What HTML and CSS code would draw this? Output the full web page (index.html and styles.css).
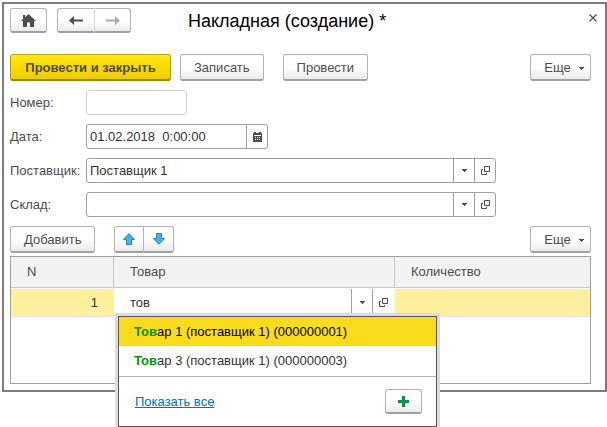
FILE: index.html
```html
<!DOCTYPE html>
<html lang="ru">
<head>
<meta charset="utf-8">
<title>Накладная (создание)</title>
<link rel="stylesheet" href="styles.css">
</head>
<body>
<svg class="sprite" aria-hidden="true">
  <symbol id="caret" viewBox="0 0 5 3"><path d="M0 0h5v1h-1v1h-1v1h-1v-1h-1v-1h-1z" fill="currentColor"/></symbol>
  <symbol id="open" viewBox="0 0 9 9"><path d="M3.500.5h5v5h-5zM2 3.500H.5v5h5V7" fill="none" stroke="currentColor"/></symbol>
  <symbol id="arrow" viewBox="0 0 14 9"><path d="M0 4.500 5 0v3.500h9v2H5V9z" fill="currentColor"/></symbol>
  <symbol id="move" viewBox="0 0 12 12"><path d="M6 .7 11.300 6v.5H8.500v5h-5v-5H.7V6z" fill="#41b4ea" stroke="#2d7fb0"/></symbol>
</svg>
<main class="window">
  <header class="titlebar">
    <button class="btn btn-home" aria-label="Домой"><svg width="15" height="13" viewBox="0 0 15 13"><path d="M7.500 0 15 7h-2v6H9V8.500H6V13H2V7H0L2 5.100V1h2v2.300z" fill="#4d4d4d"/></svg></button>
    <div class="group">
      <button class="btn btn-nav" aria-label="Назад"><svg width="14" height="9"><use href="#arrow"/></svg></button>
      <button class="btn btn-nav forward" aria-label="Вперед"><svg width="14" height="9"><use href="#arrow"/></svg></button>
    </div>
    <h1>Накладная (создание) *</h1>
    <button class="close" aria-label="Закрыть"><svg width="8" height="8" viewBox="0 0 8 8"><path d="M.5.5l7 7M7.500.5l-7 7" stroke="#4d4d4d" stroke-width="1.200"/></svg></button>
  </header>

  <div class="commands">
    <button class="btn btn-primary">Провести и закрыть</button>
    <button class="btn">Записать</button>
    <button class="btn">Провести</button>
    <button class="btn btn-more">Еще <svg width="5" height="3"><use href="#caret"/></svg></button>
  </div>

  <form class="fields">
    <label for="number">Номер:</label>
    <div class="field field-number"><input id="number" type="text"></div>
    <label for="date">Дата:</label>
    <div class="field field-date">
      <input id="date" type="text" value="01.02.2018&nbsp; 0:00:00">
      <button type="button" class="pick" aria-label="Календарь"><svg width="9" height="10" viewBox="0 0 9 10"><path d="M0 1h1V0h2v1h3V0h2v1h1v9H0z" fill="#4d4d4d"/><path d="M1 3.500h7M2 5.500h5M2 7.500h5" stroke="#fff" stroke-dasharray="1 1"/><path d="M1 3.500h7" stroke="#fff"/></svg></button>
    </div>
    <label for="supplier">Поставщик:</label>
    <div class="field field-ref">
      <input id="supplier" type="text" value="Поставщик 1">
      <button type="button" class="pick" aria-label="Выбрать"><svg width="5" height="3"><use href="#caret"/></svg></button>
      <button type="button" class="pick" aria-label="Открыть"><svg width="9" height="9"><use href="#open"/></svg></button>
    </div>
    <label for="store">Склад:</label>
    <div class="field field-ref">
      <input id="store" type="text">
      <button type="button" class="pick" aria-label="Выбрать"><svg width="5" height="3"><use href="#caret"/></svg></button>
      <button type="button" class="pick" aria-label="Открыть"><svg width="9" height="9"><use href="#open"/></svg></button>
    </div>
  </form>

  <div class="table-commands">
    <button class="btn">Добавить</button>
    <div class="group">
      <button class="btn btn-move" aria-label="Вверх"><svg width="12" height="12"><use href="#move"/></svg></button>
      <button class="btn btn-move down" aria-label="Вниз"><svg width="12" height="12"><use href="#move"/></svg></button>
    </div>
    <button class="btn btn-more">Еще <svg width="5" height="3"><use href="#caret"/></svg></button>
  </div>

  <div class="grid">
    <table>
      <colgroup><col class="col-n"><col class="col-item"><col></colgroup>
      <thead><tr><th>N</th><th>Товар</th><th>Количество</th></tr></thead>
      <tbody>
        <tr>
          <td class="num">1</td>
          <td class="editing">
            <div class="editor">
              <input type="text" value="тов" aria-label="Товар">
              <button class="pick" aria-label="Выбрать"><svg width="5" height="3"><use href="#caret"/></svg></button>
              <button class="pick" aria-label="Открыть"><svg width="9" height="9"><use href="#open"/></svg></button>
              <div class="popup">
                <ul>
                  <li class="selected"><b>Тов</b>ар 1 (поставщик 1) (000000001)</li>
                  <li><b>Тов</b>ар 3 (поставщик 1) (000000003)</li>
                </ul>
                <div class="popup-footer">
                  <a href="#">Показать все</a>
                  <button class="btn btn-add" aria-label="Создать"><svg width="11" height="11" viewBox="0 0 11 11"><path d="M4 0h3v4h4v3H7v4H4V7H0V4h4z" fill="#009646"/></svg></button>
                </div>
              </div>
            </div>
          </td>
          <td></td>
        </tr>
      </tbody>
    </table>
  </div>
</main>
</body>
</html>
```
FILE: styles.css
```css
* { box-sizing: border-box; }

body {
  min-height: 100vh;
  margin: 0;
  padding: 2px 0 0 2px;
  background: #fff;
  color: #4d4d4d;
  font: 13px/16px "Liberation Sans", Arial, sans-serif;
}

button, input { font: inherit; color: inherit; }
svg { display: block; flex: none; }
.sprite { position: absolute; width: 0; height: 0; }

.window {
  border: 2px solid #7d7d7d;
  padding: 4px 14px 6px 6px;
}

.btn {
  display: flex;
  align-items: center;
  justify-content: center;
  height: 27px;
  padding: 2px 13px 0;
  border: 1px solid #b4b4b4;
  border-bottom: 2px solid #a0a0a0;
  border-radius: 3px;
  background: linear-gradient(#fff 50%, #ebebeb);
  white-space: nowrap;
}

.group { display: flex; }
.group .btn:first-child { border-radius: 3px 0 0 3px; }
.group .btn:last-child { border-left: 0; border-radius: 0 3px 3px 0; }

.titlebar { display: flex; align-items: center; gap: 10px; }
.titlebar .btn { height: 25px; padding: 0; }
.titlebar .btn-home { width: 37px; }
.titlebar .btn-nav { width: 36px; }
.titlebar .btn-nav:first-child { width: 38px; border-right-color: #dcdcdc; }
.forward svg { transform: scaleX(-1); color: #acacac; }
h1 {
  flex: 1;
  margin: 0 0 0 47px;
  color: #000;
  font-size: 18px;
  font-weight: 400;
  line-height: 24px;
}
.close {
  display: flex;
  align-self: flex-start;
  margin-right: -10px;
  padding: 6px 4px;
  border: 0;
  background: none;
}

.commands { display: flex; gap: 19px; margin-top: 21px; }
.btn-primary {
  min-width: 161px;
  margin-right: -10px;
  border-color: #c3a200 #b89a00 #9c8300;
  background: linear-gradient(#ffe71a, #fbdb00 50%, #eecb00);
  font-weight: 700;
}
.btn-more { gap: 8px; min-width: 61px; margin-left: auto; padding: 2px 6px 0 13px; }
.btn-more svg { margin-top: 1px; }

.fields {
  display: grid;
  grid-template-columns: 76px 1fr;
  row-gap: 9px;
  align-items: center;
  margin: 9px 0;
}
.field {
  display: flex;
  height: 25px;
  border: 1px solid #a0a0a0;
  border-radius: 3px;
  overflow: hidden;
}
.field-number { width: 101px; border-color: #d2d2d2; }
.field-date { width: 182px; }
.field-ref { max-width: 410px; }

input {
  flex: 1;
  min-width: 0;
  padding: 0 3px;
  border: 0;
  outline: 0;
  background: none;
  color: #333;
}
.pick {
  display: flex;
  flex: none;
  align-items: center;
  justify-content: center;
  width: 21px;
  padding: 0;
  border: 0;
  border-left: 1px solid #a0a0a0;
  background: none;
}

.table-commands { display: flex; gap: 19px; }
.btn-move { width: 30px; padding: 0; }
.down svg { transform: scaleY(-1); }

.grid {
  min-height: 128px;
  margin-top: 3px;
  border: 1px solid #a0a0a0;
}
table { width: 100%; border-collapse: separate; border-spacing: 0; table-layout: fixed; }
.col-n { width: 103px; }
.col-item { width: 281px; }
th {
  height: 31px;
  padding: 0 16px;
  border-right: 1px solid #c8c8c8;
  border-bottom: 1px solid #c8c8c8;
  background: #f2f2f2;
  font-weight: 400;
  text-align: left;
}
th:last-child { border-right: 0; }
td {
  height: 29px;
  padding: 0 16px;
  border-top: 1px solid #fff;
  border-bottom: 1px solid #e6e6e6;
  background: #fff0a0;
  background-clip: padding-box;
}
.num { text-align: right; color: #333; }
.editing { padding: 0; background: #fff; }
.editor { position: relative; display: flex; height: 27px; padding-right: 2px; }
.editor input { padding: 0 16px; }

.popup {
  position: absolute;
  top: 27px;
  left: 4px;
  width: 319px;
  border: 1px solid #555;
  background: #fff;
  box-shadow: 0 0 0 3px #dcdcdc;
  color: #333;
}
.popup ul { margin: 0; padding: 0 0 1px; list-style: none; border-bottom: 1px solid #b4b4b4; }
.popup li { padding: 7px 15px 6px; }
.popup .selected { background: #fadc1e; color: #000; }
.popup b { color: #009600; }
.popup-footer {
  display: flex;
  align-items: center;
  justify-content: space-between;
  padding: 12px 14px 12px 16px;
}
.popup a { color: #0070c0; }
.btn-add { width: 37px; height: 25px; padding: 0; }
```
